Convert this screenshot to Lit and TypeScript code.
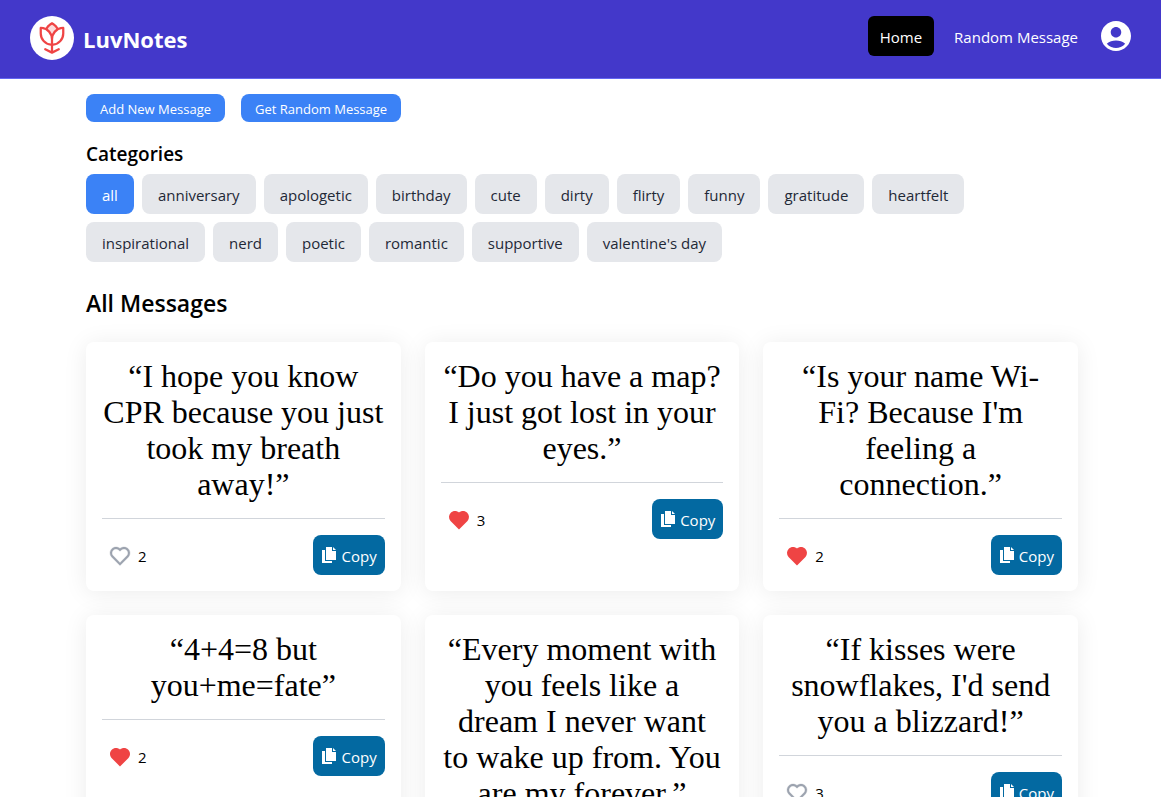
import { LitElement, html, css, svg } from "lit";
import { customElement, property, state } from "lit/decorators.js";

interface Message {
  text: string;
  likes: number;
  liked: boolean;
}

const CATEGORIES = [
  "all", "anniversary", "apologetic", "birthday", "cute", "dirty", "flirty", "funny", "gratitude",
  "heartfelt", "inspirational", "nerd", "poetic", "romantic", "supportive", "valentine's day",
];

const MESSAGES: Message[] = [
  { text: "I hope you know CPR because you just took my breath away!", likes: 2, liked: false },
  { text: "Do you have a map? I just got lost in your eyes.", likes: 3, liked: true },
  { text: "Is your name Wi-\nFi? Because I'm\nfeeling a\nconnection.", likes: 2, liked: true },
  { text: "4+4=8 but you+me=fate", likes: 2, liked: true },
  { text: "Every moment with\nyou feels like a\ndream I never want\nto wake up from. You\nare my forever.", likes: 2, liked: false },
  { text: "If kisses were snowflakes, I'd send you a blizzard!", likes: 3, liked: false },
];

const heartOutline = svg`<path d="M12 4.53C14.35 2.42 17.98 2.49 20.24 4.76C22.51 7.02 22.58 10.64 20.48 12.99L12 21.49L3.52 12.99C1.42 10.64 1.5 7.02 3.76 4.76C6.02 2.49 9.65 2.42 12 4.53ZM18.83 6.17C17.33 4.67 14.91 4.61 13.34 6.02L12 7.22L10.67 6.02C9.09 4.61 6.68 4.67 5.17 6.17C3.68 7.66 3.61 10.05 4.98 11.62L12 18.65L19.02 11.62C20.39 10.05 20.32 7.67 18.83 6.17Z" stroke="#9ca3af" stroke-width=".3"/>`;
const heartSolid = svg`<path d="M12 4.53C14.35 2.42 17.98 2.49 20.24 4.76C22.51 7.02 22.58 10.64 20.48 12.99L12 21.49L3.52 12.99C1.42 10.64 1.5 7.02 3.76 4.76C6.02 2.49 9.65 2.42 12 4.53Z"/>`;

@customElement("message-card")
export class MessageCard extends LitElement {
  @property({ attribute: false }) message!: Message;

  static styles = css`
    :host {
      display: block;
      padding: 16px;
      border-radius: 8px;
      background: #fff;
      box-shadow: 0 2px 24px rgba(0, 0, 0, 0.08);
    }
    .quote {
      margin: 0 0 16px;
      font: 32px/36px Georgia, "Liberation Serif", serif;
      text-align: center;
      white-space: pre-line;
    }
    .footer {
      display: flex;
      align-items: center;
      justify-content: space-between;
      padding-top: 16px;
      border-top: 1px solid #d1d5db;
    }
    button {
      display: flex;
      align-items: center;
      border: 0;
      font: inherit;
      cursor: pointer;
    }
    .like {
      gap: 6px;
      padding: 2px 6px 0;
      background: none;
      color: #000;
    }
    .heart {
      width: 24px;
      height: 24px;
      fill: #9ca3af;
    }
    .heart.liked {
      fill: #ef4444;
    }
    .copy {
      gap: 4px;
      height: 40px;
      padding: 0 8px;
      border-radius: 8px;
      background: #0369a1;
      color: #fff;
    }
    .copy span {
      padding-top: 2px;
    }
    .sheets {
      width: 16px;
      height: 16px;
      fill: currentColor;
    }
  `;

  render() {
    const { text, likes, liked } = this.message;
    return html`
      <p class="quote">${`“${text}”`}</p>
      <div class="footer">
        <button class="like" aria-label="Like, ${likes}" aria-pressed=${liked}>
          <svg class="heart ${liked ? "liked" : ""}" viewBox="0 0 24 24">${liked ? heartSolid : heartOutline}</svg>
          <span>${likes}</span>
        </button>
        <button class="copy">
          <svg class="sheets" viewBox="0 0 16 16">
            <path d="M1 3h3v11h7v2H1z" />
            <path d="M5 0h6v4h4v9H5z" />
            <path d="M12 0l3 3h-3z" />
          </svg>
          <span>Copy</span>
        </button>
      </div>
    `;
  }
}

@customElement("app-root")
export class AppRoot extends LitElement {
  @state() private category = "all";

  static styles = css`
    :host {
      display: block;
      min-height: 100vh;
      background: #fff;
      color: #000;
      font: 15px/24px "Segoe UI", "Open Sans", sans-serif;
    }
    a {
      color: inherit;
      text-decoration: none;
    }
    button {
      border: 0;
      font: inherit;
      cursor: pointer;
    }
    h1,
    h2 {
      margin: 0;
      font-weight: 600;
    }
    .header {
      display: flex;
      align-items: center;
      justify-content: space-between;
      height: 78px;
      box-sizing: border-box;
      padding: 0 27px 2px 30px;
      background: #4338ca;
      box-shadow: 0 1px #6366f1;
      color: #fff;
    }
    .brand,
    .nav {
      display: flex;
      align-items: center;
    }
    .brand {
      gap: 9px;
      font-size: 22px;
      line-height: 32px;
      font-weight: 700;
    }
    .name {
      padding-top: 2px;
    }
    .badge {
      display: grid;
      place-items: center;
      width: 44px;
      height: 44px;
      border-radius: 50%;
      background: #fff;
    }
    .tulip {
      width: 36px;
      height: 36px;
      fill: #ef4444;
    }
    .nav {
      gap: 8px;
      padding-bottom: 4px;
    }
    .link {
      padding: 9px 12px 7px;
      border-radius: 6px;
    }
    .link.current {
      background: #000;
    }
    .avatar {
      display: flex;
      padding: 0;
      background: none;
      color: inherit;
    }
    .avatar svg {
      width: 36px;
      height: 36px;
      fill: currentColor;
    }
    .page {
      padding: 16px 0 24px 3px;
    }
    .content {
      max-width: 992px;
      margin: 0 auto;
      padding: 0 16px;
    }
    .actions {
      display: flex;
      gap: 16px;
      margin-bottom: 18px;
    }
    .action {
      padding: 5px 14px 3px;
      border-radius: 8px;
      background: #3b82f6;
      color: #fff;
      font-size: 13px;
      line-height: 20px;
    }
    .subheading {
      margin-bottom: 6px;
      font-size: 19px;
      line-height: 28px;
    }
    .chips {
      display: flex;
      flex-wrap: wrap;
      gap: 8px;
      max-width: 896px;
      margin-bottom: 23px;
    }
    .chip {
      padding: 9px 16px 7px;
      border-radius: 8px;
      background: #e5e7eb;
      color: #1f2937;
    }
    .chip.selected {
      background: #3b82f6;
      color: #fff;
    }
    .heading {
      margin-bottom: 21px;
      font-size: 23px;
      line-height: 36px;
    }
    .grid {
      display: grid;
      grid-template-columns: repeat(auto-fill, minmax(280px, 1fr));
      gap: 24px;
    }
  `;

  render() {
    return html`
      <header class="header">
        <a class="brand" href="#">
          <span class="badge">
            <svg class="tulip" viewBox="0 0 256 256">
              <path opacity=".2" d="M166 59c-14 7-38 33-38 77 0-44-24-70-38-77 14-24 38-34 38-34s24 10 38 34Z" />
              <path d="M208,48a87.48,87.48,0,0,0-35.36,7.43c-15.1-25.37-39.92-38-41.06-38.59a8,8,0,0,0-7.16,0c-1.14.58-26,13.22-41.06,38.59A87.48,87.48,0,0,0,48,48a8,8,0,0,0-8,8V96a88.11,88.11,0,0,0,80,87.63v35.43L83.58,200.84a8,8,0,1,0-7.16,14.32l48,24a8,8,0,0,0,7.16,0l48-24a8,8,0,0,0-7.16-14.32L136,219.06V183.63A88.11,88.11,0,0,0,216,96V56A8,8,0,0,0,208,48ZM120,167.56A72.1,72.1,0,0,1,56,96V64.44A72.1,72.1,0,0,1,120,136Zm8-68.2A88.4,88.4,0,0,0,97.39,62.17C107.21,45.44,121.91,36.45,128,33.2c6.09,3.25,20.79,12.24,30.61,29A88.37,88.37,0,0,0,128,99.36ZM200,96a72.1,72.1,0,0,1-64,71.56V136a72.1,72.1,0,0,1,64-71.56Z" />
            </svg>
          </span>
          <span class="name">LuvNotes</span>
        </a>
        <nav class="nav">
          <a class="link current" href="#" aria-current="page">Home</a>
          <a class="link" href="#random">Random Message</a>
          <button class="avatar" aria-label="Account">
            <svg viewBox="0 0 24 24">
              <path d="M12 2C6.48 2 2 6.48 2 12s4.48 10 10 10 10-4.48 10-10S17.52 2 12 2zm0 4c1.93 0 3.5 1.57 3.5 3.5S13.93 13 12 13s-3.5-1.57-3.5-3.5S10.07 6 12 6zm0 14c-2.03 0-4.43-.82-6.14-2.88C7.55 15.8 9.68 15 12 15s4.45.8 6.14 2.12C16.43 19.18 14.03 20 12 20z" />
            </svg>
          </button>
        </nav>
      </header>
      <main class="page">
        <div class="content">
          <div class="actions">
            <button class="action">Add New Message</button>
            <button class="action">Get Random Message</button>
          </div>
          <h2 class="subheading">Categories</h2>
          <div class="chips">
            ${CATEGORIES.map(
              (name) => html`<button
                class="chip ${name === this.category ? "selected" : ""}"
                aria-pressed=${name === this.category}
                @click=${() => (this.category = name)}
              >${name}</button>`,
            )}
          </div>
          <h1 class="heading">All Messages</h1>
          <div class="grid">
            ${MESSAGES.map((m) => html`<message-card .message=${m}></message-card>`)}
          </div>
        </div>
      </main>
    `;
  }
}
